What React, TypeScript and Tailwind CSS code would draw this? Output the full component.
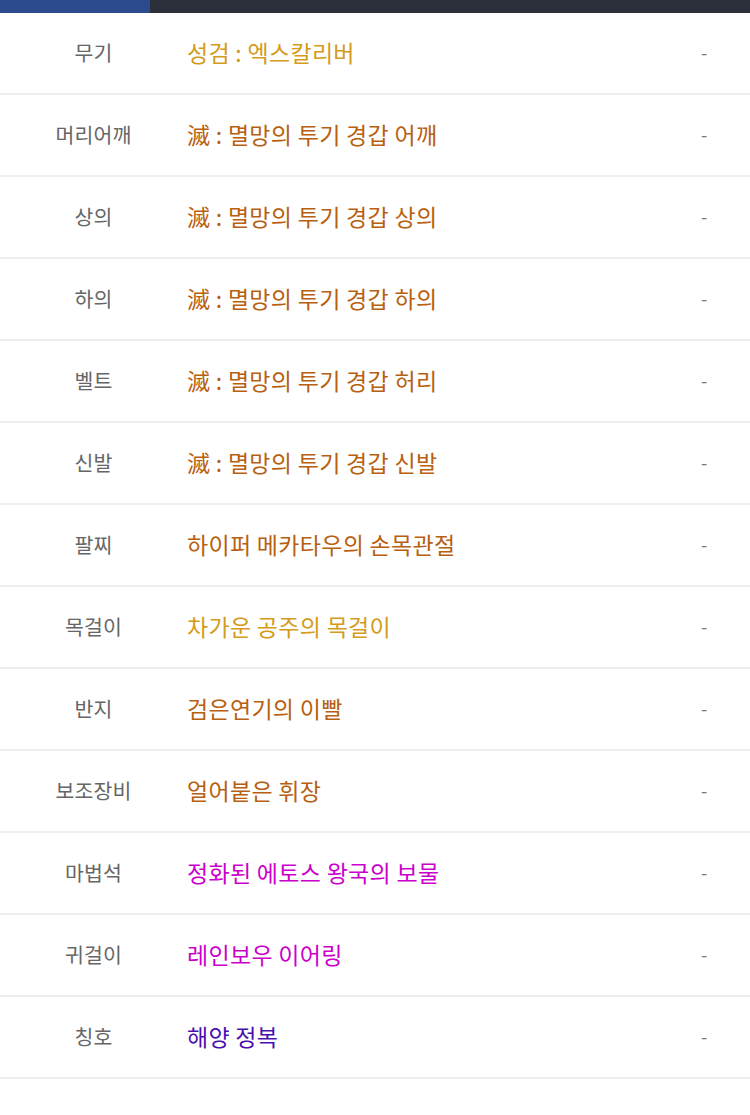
const rows = [
  { slot: "무기", name: "성검 : 엑스칼리버", color: "text-[#d49b1c]" },
  { slot: "머리어깨", name: "滅 : 멸망의 투기 경갑 어깨", color: "text-[#b8600f]" },
  { slot: "상의", name: "滅 : 멸망의 투기 경갑 상의", color: "text-[#b8600f]" },
  { slot: "하의", name: "滅 : 멸망의 투기 경갑 하의", color: "text-[#b8600f]" },
  { slot: "벨트", name: "滅 : 멸망의 투기 경갑 허리", color: "text-[#b8600f]" },
  { slot: "신발", name: "滅 : 멸망의 투기 경갑 신발", color: "text-[#b8600f]" },
  { slot: "팔찌", name: "하이퍼 메카타우의 손목관절", color: "text-[#b8600f]" },
  { slot: "목걸이", name: "차가운 공주의 목걸이", color: "text-[#d49b1c]" },
  { slot: "반지", name: "검은연기의 이빨", color: "text-[#b8600f]" },
  { slot: "보조장비", name: "얼어붙은 휘장", color: "text-[#b8600f]" },
  { slot: "마법석", name: "정화된 에토스 왕국의 보물", color: "text-[#cc00cc]" },
  { slot: "귀걸이", name: "레인보우 이어링", color: "text-[#cc00cc]" },
  { slot: "칭호", name: "해양 정복", color: "text-[#4b0fb0]" },
];

export default function App() {
  return (
    <div className="min-h-[1115px] bg-white font-['Noto_Sans_CJK_KR','Noto_Sans',sans-serif]">
      <div className="flex h-[13px]">
        <div className="w-[150px] bg-[#2d4a8c]" />
        <div className="flex-1 bg-[#2b303b]" />
      </div>
      {rows.map((row) => (
        <div
          key={row.slot}
          className="flex h-[82px] items-center border-b-2 border-[#eeeeee] pb-[2px]"
        >
          <div className="w-[187px] text-center text-[20.5px] tracking-[0.2px] text-[#666666]">
            {row.slot}
          </div>
          <div className={`flex-1 text-[23px] tracking-[0.3px] ${row.color}`}>
            {row.name}
          </div>
          <div className="w-[92px] text-center text-lg text-[#777777]">-</div>
        </div>
      ))}
    </div>
  );
}
